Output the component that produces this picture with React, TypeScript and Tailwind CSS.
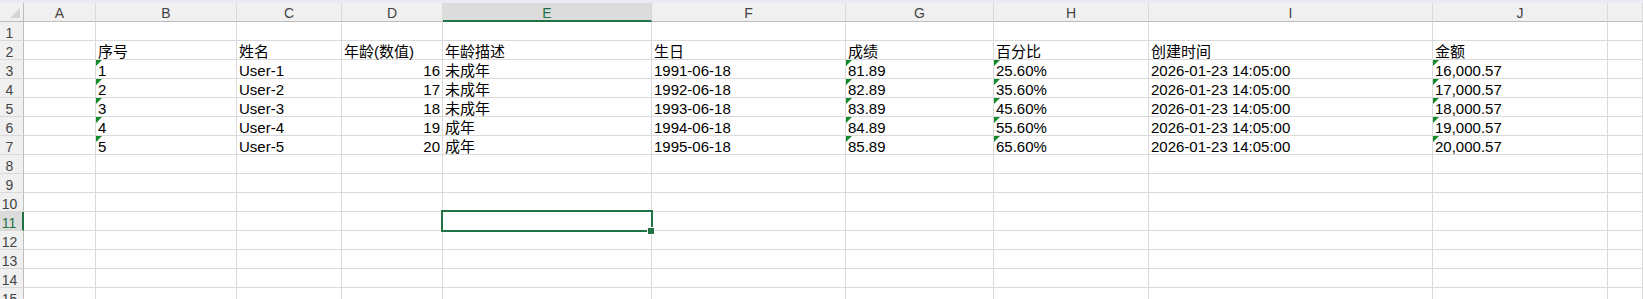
import React from "react";

type Cell = { t: string; r?: boolean; tri?: boolean };

const letters = ["A", "B", "C", "D", "E", "F", "G", "H", "I", "J", ""];

function buildRows(): Cell[][] {
  const rows: Cell[][] = [];
  const empty = (): Cell[] => Array.from({ length: 11 }, () => ({ t: "" }));
  rows.push(empty());
  rows.push([
    { t: "" },
    { t: "序号" },
    { t: "姓名" },
    { t: "年龄(数值)" },
    { t: "年龄描述" },
    { t: "生日" },
    { t: "成绩" },
    { t: "百分比" },
    { t: "创建时间" },
    { t: "金额" },
    { t: "" },
  ]);
  for (let i = 1; i <= 5; i++) {
    const age = 15 + i;
    rows.push([
      { t: "" },
      { t: String(i), tri: true },
      { t: `User-${i}` },
      { t: String(age), r: true },
      { t: age < 19 ? "未成年" : "成年" },
      { t: `199${i}-06-18` },
      { t: `8${i}.89`, tri: true },
      { t: `${15 + 10 * i}.60%`, tri: true },
      { t: "2026-01-23 14:05:00" },
      { t: `${15 + i},000.57`, tri: true },
      { t: "" },
    ]);
  }
  for (let i = 8; i <= 15; i++) rows.push(empty());
  return rows;
}

const Tri = () => (
  <svg className="absolute left-0 top-0" width="6" height="6" viewBox="0 0 6 6">
    <polygon points="0,0 6,0 0,6" fill="#138a2a" />
  </svg>
);

export default function App() {
  const rows = buildRows();
  return (
    <div
      className="h-[299px] w-[1643px] overflow-hidden bg-white"
      style={{ fontFamily: '"Liberation Sans", "Noto Sans CJK SC", sans-serif' }}
    >
      <div className="h-[3px] bg-[#e8ecf0]" />
      <div className="grid grid-cols-[24px_72px_141px_105px_101px_209px_194px_148px_155px_284px_175px_1fr]">
        {/* header row */}
        <div className="relative h-[19px] border-r border-b border-r-[#bdbdbd] border-b-[#bdbdbd] bg-[#f0f0f0]">
          <svg className="absolute left-[10px] top-[5px]" width="10" height="10" viewBox="0 0 10 10">
            <polygon points="10,0 10,10 0,10" fill="#d4d4d4" />
          </svg>
        </div>
        {letters.map((l, i) => (
          <div
            key={"h" + i}
            className={
              i === 4
                ? "h-[19px] border-r border-r-[#d4d4d4] border-b-2 border-b-[#217346] bg-[#dcdcdc] pt-[2px] text-center text-[14px] leading-[16px] text-[#217346]"
                : "h-[19px] border-r border-b border-r-[#d9d9d9] border-b-[#bdbdbd] bg-[#f0f0f0] pt-[2px] text-center text-[14px] leading-[16px] text-[#444444]"
            }
          >
            {l}
          </div>
        ))}
        {rows.map((row, ri) => (
          <React.Fragment key={"r" + ri}>
            <div
              className={
                ri === 10
                  ? "h-[19px] border-r-2 border-b border-r-[#217346] border-b-[#d9d9d9] bg-[#dcdcdc] pr-[4px] pt-[4px] text-center text-[14px] leading-[14px] text-[#217346]"
                  : "h-[19px] border-r border-b border-r-[#bdbdbd] border-b-[#d9d9d9] bg-[#f0f0f0] pr-[4px] pt-[4px] text-center text-[14px] leading-[14px] text-[#444444]"
              }
            >
              {ri + 1}
            </div>
            {row.map((c, ci) => (
              <div
                key={"c" + ri + "-" + ci}
                className={
                  "relative h-[19px] whitespace-nowrap border-r border-b border-[#dadada] pt-[3px] text-[15px] leading-[15px] text-black " +
                  (c.r ? "pr-[2px] text-right" : "pl-[2px] text-left")
                }
              >
                {c.tri && <Tri />}
                {c.t}
                {ri === 10 && ci === 4 && (
                  <div className="absolute left-[-2px] top-[-2px] z-10 h-[22px] w-[212px] border-2 border-[#217346]">
                    <div className="absolute left-[204px] top-[15px] h-[8px] w-[8px] border border-white bg-[#217346]" />
                  </div>
                )}
              </div>
            ))}
          </React.Fragment>
        ))}
      </div>
    </div>
  );
}
